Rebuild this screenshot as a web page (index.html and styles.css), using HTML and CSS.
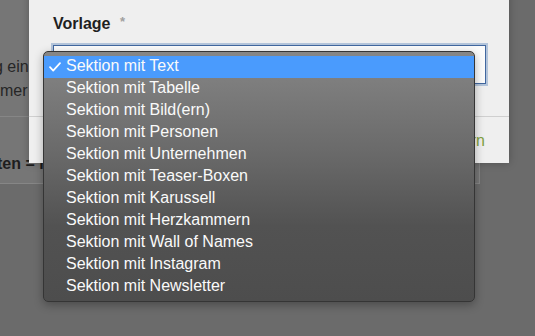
FILE: index.html
```html
<!DOCTYPE html>
<html lang="de">
<head>
  <meta charset="UTF-8">
  <meta name="viewport" content="width=device-width, initial-scale=1.0">
  <title>Sektion anlegen</title>
  <link rel="stylesheet" href="styles.css">
</head>
<body>
  <!-- Page behind the dialog -->
  <div class="page">
    <p class="intro intro-first">g ein</p>
    <p class="intro">mer</p>
    <div class="rule-box">
      <span class="formula">ten = r</span>
    </div>
  </div>

  <!-- Dialog -->
  <div class="modal">
    <div class="field">
      <label class="field-label">Vorlage <span class="required">*</span></label>
      <div class="select-box"></div>
    </div>
    <div class="modal-footer">
      <a class="save-link" href="#">Speichern</a>
    </div>
  </div>

  <!-- Open select menu -->
  <ul class="dropdown">
    <li class="option selected">
      <svg class="check" width="12" height="10" viewBox="0 0 12 10"><path d="M1 5.2 L4.2 8.6 L11 1.2" fill="none" stroke="#fff" stroke-width="1.7" stroke-linecap="round" stroke-linejoin="round"/></svg>
      Sektion mit Text
    </li>
    <li class="option">Sektion mit Tabelle</li>
    <li class="option">Sektion mit Bild(ern)</li>
    <li class="option">Sektion mit Personen</li>
    <li class="option">Sektion mit Unternehmen</li>
    <li class="option">Sektion mit Teaser-Boxen</li>
    <li class="option">Sektion mit Karussell</li>
    <li class="option">Sektion mit Herzkammern</li>
    <li class="option">Sektion mit Wall of Names</li>
    <li class="option">Sektion mit Instagram</li>
    <li class="option">Sektion mit Newsletter</li>
  </ul>
</body>
</html>
```

FILE: styles.css
```css
body {
  margin: 0;
  width: 535px;
  height: 336px;
  overflow: hidden;
  position: relative;
  background: #6b6b6b;
  font-family: "Liberation Sans", Arial, sans-serif;
}
.page {
  width: 480px;
  height: 184px;
  padding-top: 55px;
  box-sizing: border-box;
  background: #767676;
}
.intro {
  margin: 0;
  font-size: 16px;
  line-height: 24px;
  color: #262626;
  white-space: nowrap;
}
.intro-first {
  text-indent: -6px;
}
.rule-box {
  margin-top: 13px;
  margin-left: -10px;
  height: 68px;
  padding: 36px 0 0 6px;
  box-sizing: border-box;
  border: 1px solid #868686;
}
.formula {
  font-size: 16px;
  line-height: 22px;
  font-weight: bold;
  color: #1e1e1e;
  white-space: nowrap;
}
.modal {
  position: absolute;
  left: 29px;
  top: -20px;
  width: 480px;
  height: 183px;
  background: #efefef;
  box-shadow: 0 0 8px rgba(0, 0, 0, 0.25);
  display: flex;
  flex-direction: column;
}
.field {
  padding: 34px 23px 0 24px;
  height: 137px;
  box-sizing: border-box;
  border-bottom: 1px solid #cfcfcf;
}
.field-label {
  display: block;
  font-size: 16px;
  line-height: 20px;
  font-weight: bold;
  color: #1f1f1f;
}
.required {
  margin-left: 5px;
  font-size: 13px;
  color: #a0a0a0;
  vertical-align: top;
  line-height: 16px;
}
.select-box {
  margin-top: 11px;
  height: 39px;
  box-sizing: border-box;
  background: #fbfbfb;
  border: 1px solid #41679f;
  box-shadow: 0 0 0 2px #b3c4da;
}
.modal-footer {
  display: flex;
  justify-content: flex-end;
  padding: 14px 24px 0 0;
}
.save-link {
  font-size: 16px;
  line-height: 20px;
  color: #7fa23f;
  text-decoration: none;
}
.dropdown {
  position: absolute;
  left: 43px;
  top: 51px;
  width: 432px;
  height: 251px;
  box-sizing: border-box;
  margin: 0;
  padding: 4px 0 3px;
  list-style: none;
  border: 1px solid #353535;
  border-radius: 5px;
  background: linear-gradient(#868686, #6a6a6a 40%, #525252 70%, #4d4d4d);
  box-shadow: 0 3px 10px rgba(0, 0, 0, 0.3);
}
.option {
  position: relative;
  height: 22px;
  box-sizing: border-box;
  padding: 1px 0 3px 22px;
  font-size: 16px;
  line-height: 18px;
  color: #fafafa;
  white-space: nowrap;
}
.option.selected {
  background: #4a9bfd;
}
.check {
  position: absolute;
  left: 5px;
  top: 6px;
}
```
